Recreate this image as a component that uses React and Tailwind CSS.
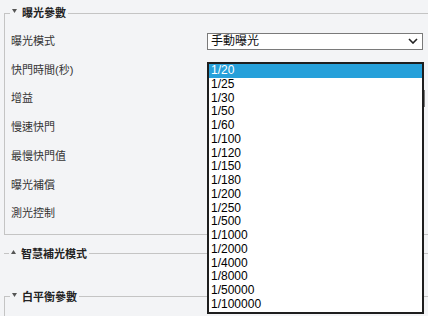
import React from 'react';

const rows = [
  { label: '曝光模式', value: '手動曝光' },
  { label: '快門時間(秒)', value: '1/20' },
  { label: '增益', value: '', wide: true },
  { label: '慢速快門', value: '' },
  { label: '最慢快門值', value: '' },
  { label: '曝光補償', value: '' },
  { label: '測光控制', value: '' },
];

const shutterOptions = [
  '1/20', '1/25', '1/30', '1/50', '1/60', '1/100', '1/120', '1/150', '1/180',
  '1/200', '1/250', '1/500', '1/1000', '1/2000', '1/4000', '1/8000', '1/50000', '1/100000',
];

const Caret = ({ up }) => (
  <svg width="5" height="4" viewBox="0 0 5 4" className="mt-[4px]">
    {up ? <polygon points="0,4 5,4 2.5,0" fill="#555" /> : <polygon points="0,0 5,0 2.5,4" fill="#555" />}
  </svg>
);

const Legend = ({ title, up }) => (
  <legend className="ml-[5px] px-[2px] h-[16px]">
    <span className="flex items-start h-[16px] gap-[5px]">
      <Caret up={up} />
      <span className="text-[11px] leading-[16px] font-bold text-[#222]">{title}</span>
    </span>
  </legend>
);

const Select = ({ value, wide }) => (
  <div
    className={`${wide ? 'w-[218px]' : 'w-[216px]'} h-[17px] border border-[#7a7a7a] bg-white flex items-center justify-between pl-[3px] pr-[4px]`}
  >
    <span className="text-[12px] leading-[15px] text-[#111]">{value}</span>
    <svg width="10" height="6" viewBox="0 0 10 6">
      <polyline points="1,1 5,5 9,1" fill="none" stroke="#222" strokeWidth="1.6" />
    </svg>
  </div>
);

export default function App() {
  return (
    <div
      className="relative w-[428px] h-[316px] overflow-hidden bg-[#f3f4f6] pt-[5px]"
      style={{ fontFamily: '"Liberation Sans", "Noto Sans CJK TC", sans-serif' }}
    >
      {/* exposure params */}
      <fieldset className="ml-[4px] w-[460px] border border-[#c4c4c4] pb-[6px]">
        <Legend title="曝光參數" />
        <div className="pl-[6px] pt-[6px]">
          {rows.map((r) => (
            <div key={r.label} className="flex items-center h-[28.7px]">
              <div className="w-[196px] text-[11px] text-[#333]">{r.label}</div>
              <Select value={r.value} wide={r.wide} />
            </div>
          ))}
        </div>
      </fieldset>

      {/* smart light (collapsed) */}
      <fieldset className="ml-[4px] mt-[11px] w-[460px] border-t border-[#c4c4c4]">
        <Legend title="智慧補光模式" up />
      </fieldset>

      {/* white balance */}
      <fieldset className="ml-[4px] mt-[27px] w-[460px] h-[80px] border-l border-t border-[#c4c4c4]">
        <Legend title="白平衡參數" />
      </fieldset>

      {/* open shutter dropdown */}
      <ul className="absolute left-[207px] top-[62px] w-[217px] border-2 border-[#1e1e1e] bg-white">
        {shutterOptions.map((o, i) => (
          <li
            key={o}
            className={`h-[13.75px] leading-[13.75px] pl-[2px] text-[12px] ${i === 0 ? 'bg-[#26a0da] text-white' : 'text-black'}`}
          >
            {o}
          </li>
        ))}
      </ul>
    </div>
  );
}
